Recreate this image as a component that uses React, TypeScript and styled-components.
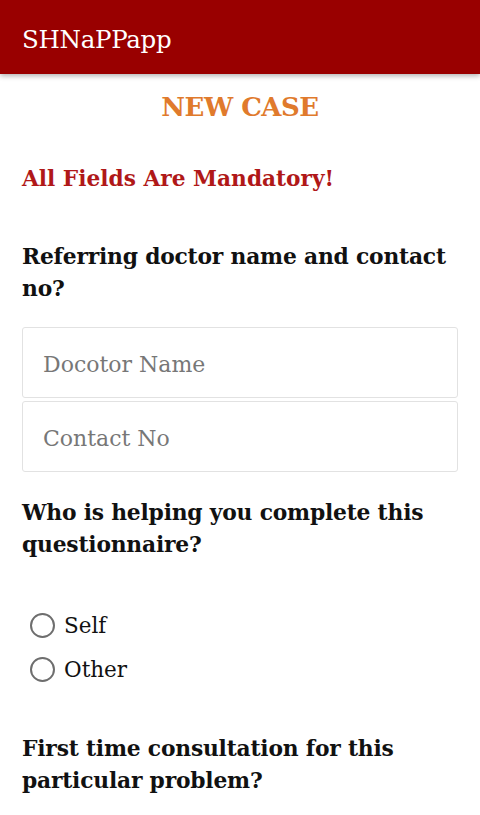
import React, { useState } from "react";
import styled, { createGlobalStyle } from "styled-components";

const GlobalStyle = createGlobalStyle`
	html, body {
		margin: 0;
		padding: 0;
		background: #ffffff;
		font-family: "DejaVu Serif", "Liberation Serif", serif;
	}
	* {
		box-sizing: border-box;
	}
`;

const Page = styled.div`
	width: 100%;
	min-height: 100vh;
	background: #ffffff;
`;

const AppBar = styled.header`
	height: 74px;
	background: #990000;
	display: flex;
	align-items: center;
	padding: 4px 22px 0;
	box-shadow: 0 2px 5px rgba(0, 0, 0, 0.3);
`;

const AppTitle = styled.div`
	color: #ffffff;
	font-size: 24.5px;
	letter-spacing: -0.3px;
`;

const Content = styled.main`
	padding: 0 22px;
`;

const Heading = styled.h1`
	margin: 18px 0 0;
	text-align: center;
	color: #e07a2c;
	font-size: 26px;
	font-weight: 700;
	letter-spacing: -0.5px;
`;

const Warning = styled.div`
	margin-top: 44px;
	color: #b01818;
	font-size: 21.7px;
	font-weight: 700;
`;

const Question = styled.div<{ $top: number }>`
	margin-top: ${(p) => p.$top}px;
	color: #111111;
	font-size: 21.8px;
	font-weight: 700;
	line-height: 32px;
	letter-spacing: -0.2px;
`;

const Fields = styled.div`
	margin-top: 22px;
	display: flex;
	flex-direction: column;
	gap: 3px;
`;

const Field = styled.input`
	width: 100%;
	height: 71px;
	border: 1px solid #e2e2e2;
	border-radius: 3px;
	padding: 4px 20px 0;
	font-family: inherit;
	font-size: 22px;
	color: #222222;
	outline: none;
	background: #ffffff;
	&::placeholder {
		color: #777777;
	}
`;

const Options = styled.div`
	margin-top: 46px;
	padding-left: 8px;
	display: flex;
	flex-direction: column;
	gap: 8px;
`;

const Option = styled.label`
	display: flex;
	align-items: center;
	gap: 9px;
	height: 36px;
	font-size: 21.5px;
	color: #111111;
	cursor: pointer;
`;

const Radio = styled.span<{ $checked: boolean }>`
	width: 25px;
	height: 25px;
	border-radius: 50%;
	border: 2px solid #6e6e6e;
	display: flex;
	align-items: center;
	justify-content: center;
	&::after {
		content: "";
		width: 11px;
		height: 11px;
		border-radius: 50%;
		background: ${(p) => (p.$checked ? "#990000" : "transparent")};
	}
`;

const HiddenInput = styled.input`
	display: none;
`;

const helpers = ["Self", "Other"];

export default function App() {
	const [helper, setHelper] = useState<string>("");

	return (
		<Page>
			<GlobalStyle />
			<AppBar>
				<AppTitle>SHNaPPapp</AppTitle>
			</AppBar>
			<Content>
				<Heading>NEW CASE</Heading>
				<Warning>All Fields Are Mandatory!</Warning>
				<Question $top={50}>Referring doctor name and contact no?</Question>
				<Fields>
					<Field placeholder="Docotor Name" />
					<Field placeholder="Contact No" />
				</Fields>
				<Question $top={25}>Who is helping you complete this questionnaire?</Question>
				<Options>
					{helpers.map((h) => (
						<Option key={h}>
							<HiddenInput
								type="radio"
								name="helper"
								checked={helper === h}
								onChange={() => setHelper(h)}
							/>
							<Radio $checked={helper === h} />
							{h}
						</Option>
					))}
				</Options>
				<Question $top={46}>First time consultation for this particular problem?</Question>
			</Content>
		</Page>
	);
}
